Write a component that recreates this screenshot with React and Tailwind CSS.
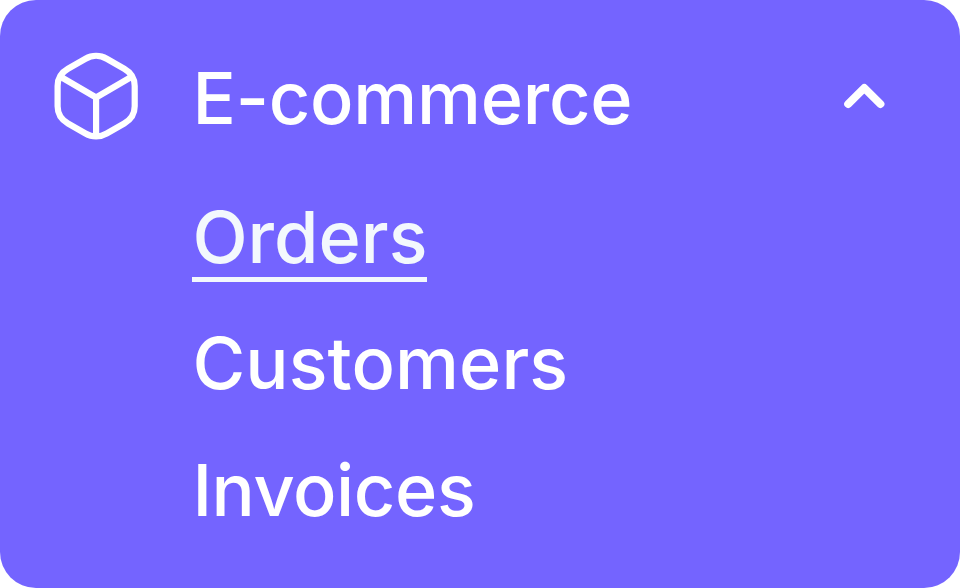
const items = [
  { label: 'Orders', tone: 'border-b-[5px] border-[#f3f8fd] text-[#f3f8fd]' },
  { label: 'Customers', tone: 'tracking-[0.08px]' },
  { label: 'Invoices', tone: 'tracking-[-0.4px]' },
];

function BoxIcon() {
  return (
    <svg className="h-[88px] w-[86px] shrink-0" viewBox="0 0 86 88" fill="none" stroke="white" strokeWidth="6.2" strokeLinejoin="round">
      <path d="M32.500 6.800C39 3 47.200 3 53.700 6.800L71.200 16.800C77.700 20.500 81.700 26.500 81.700 34V54.300C81.700 61.800 77.700 67.800 71.200 71.500L53.700 81.500C47.200 85.300 39 85.300 32.500 81.500L15 71.500C8.500 67.800 4.600 61.800 4.600 54.300V34C4.600 26.500 8.500 20.500 15 16.800Z" />
      <path d="M8 25L43.100 45.500L78.200 25M43.100 45.500V84" />
    </svg>
  );
}

export default function App() {
  return (
    <div className="flex h-[588px] w-[960px] flex-col rounded-[36px] bg-[#7464ff] font-['Inter',sans-serif] text-[72px] leading-[80px] font-medium text-white">
      <div className="flex h-[192px] items-center pr-[75px] pl-[53px]">
        <BoxIcon />
        <span className="ml-[53.5px] pt-1 tracking-[-0.25px]">E-commerce</span>
        <svg className="ml-auto h-[26px] w-[42px]" viewBox="0 0 42 26" fill="none" stroke="white" strokeWidth="8" strokeLinecap="round" strokeLinejoin="round">
          <path d="M5.200 21L21.300 5L37.400 21" />
        </svg>
      </div>
      <div className="flex flex-col items-start pt-[5px] pl-[192.4px]">
        {items.map((item) => (
          <div key={item.label} className="flex h-[126.4px] items-start">
            <span className={item.tone}>{item.label}</span>
          </div>
        ))}
      </div>
    </div>
  );
}
